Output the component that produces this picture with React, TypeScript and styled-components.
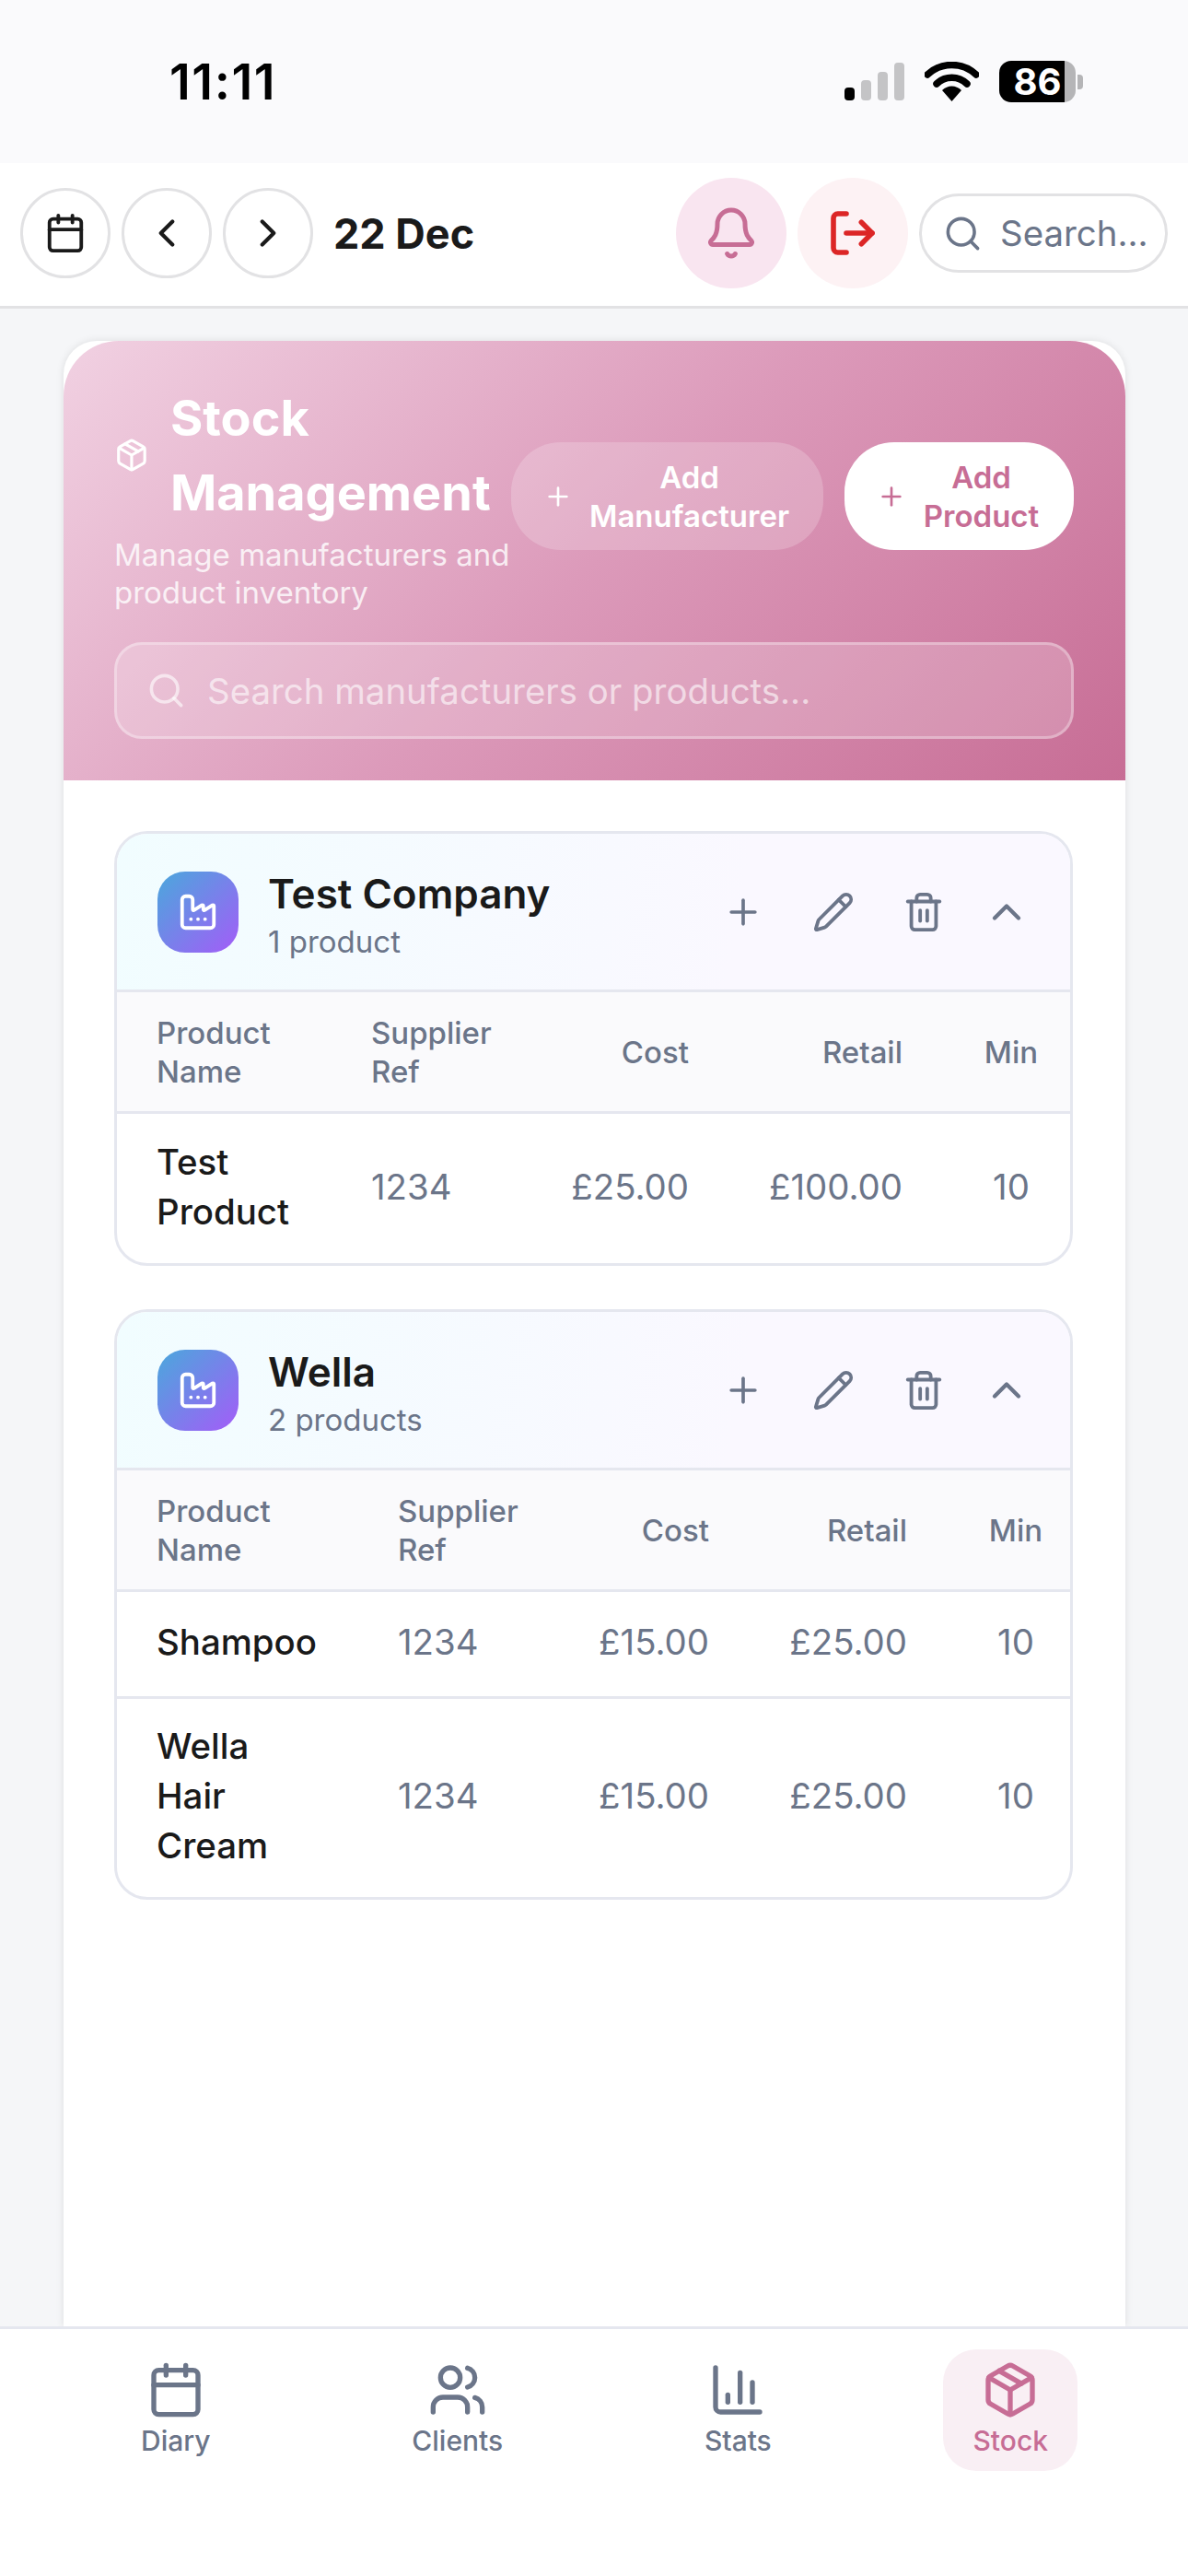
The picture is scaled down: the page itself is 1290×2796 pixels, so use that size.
import styled, { createGlobalStyle } from 'styled-components';
import {
  BarChart3,
  Bell,
  Calendar,
  ChevronLeft,
  ChevronRight,
  ChevronUp,
  Factory,
  LogOut,
  Package,
  Pencil,
  Plus,
  Search,
  Trash2,
  Users,
} from 'lucide-react';

const GlobalStyle = createGlobalStyle`
  html, body {
    margin: 0;
    padding: 0;
    background: #f5f6f8;
    font-family: Inter, "Liberation Sans", sans-serif;
  }
  * { box-sizing: border-box; }
`;

type Product = { name: string; ref: string; cost: string; retail: string; min: string; height: number };
type Company = { name: string; count: string; nameCol: number; costCol: number; retailCol: number; products: Product[] };

const companies: Company[] = [
  {
    name: 'Test Company',
    count: '1 product',
    nameCol: 233,
    costCol: 155,
    retailCol: 232,
    products: [{ name: 'Test Product', ref: '1234', cost: '£25.00', retail: '£100.00', min: '10', height: 162 }],
  },
  {
    name: 'Wella',
    count: '2 products',
    nameCol: 262,
    costCol: 148,
    retailCol: 215,
    products: [
      { name: 'Shampoo', ref: '1234', cost: '£15.00', retail: '£25.00', min: '10', height: 116 },
      { name: 'Wella Hair Cream', ref: '1234', cost: '£15.00', retail: '£25.00', min: '10', height: 215 },
    ],
  },
];

const navItems = [
  { label: 'Diary', icon: Calendar },
  { label: 'Clients', icon: Users },
  { label: 'Stats', icon: BarChart3 },
  { label: 'Stock', icon: Package, active: true },
];

export default function App() {
  return (
    <Screen>
      <GlobalStyle />
      <StatusBar>
        <Clock>11:11</Clock>
        <StatusIcons>
          <svg width="65" height="41" viewBox="0 0 65 41">
            <rect x="0" y="27" width="11" height="14" rx="4" fill="#000" />
            <rect x="18" y="19" width="11" height="22" rx="4" fill="#c4c4c6" />
            <rect x="36" y="10" width="11" height="31" rx="4" fill="#c4c4c6" />
            <rect x="54" y="0" width="11" height="41" rx="4" fill="#c4c4c6" />
          </svg>
          <svg width="59" height="43" viewBox="0 0 59 43">
            <path d="M3 14C18 0 41 0 56 14" fill="none" stroke="#000" strokeWidth="7.5" strokeLinecap="round" />
            <path d="M13 24C22 15 37 15 46 24" fill="none" stroke="#000" strokeWidth="7.5" strokeLinecap="round" />
            <path d="M19 31c6-6 15-6 21 0L29.500 43z" fill="#000" />
          </svg>
          <Battery>
            <BatteryBody>86</BatteryBody>
            <BatteryCap />
          </Battery>
        </StatusIcons>
      </StatusBar>

      <TopBar>
        <DateControls>
          <RoundButton><Calendar size={46} strokeWidth={2} /></RoundButton>
          <RoundButton><ChevronLeft size={50} strokeWidth={2} /></RoundButton>
          <RoundButton><ChevronRight size={50} strokeWidth={2} /></RoundButton>
          <DateLabel>22 Dec</DateLabel>
        </DateControls>
        <TopActions>
          <BigRound $bg="#f9e5f0" $color="#c76d95"><Bell size={60} strokeWidth={2} /></BigRound>
          <BigRound $bg="#fdf2f4" $color="#dc2626"><LogOut size={56} strokeWidth={2.4} /></BigRound>
          <TopSearch>
            <Search size={43} strokeWidth={2} color="#6b7589" />
            <span>Search...</span>
          </TopSearch>
        </TopActions>
      </TopBar>

      <Main>
        <Card>
          <Hero>
            <HeroRow>
              <HeroText>
                <TitleRow>
                  <Package size={38} strokeWidth={2} color="#fff" />
                  <Title>Stock Management</Title>
                </TitleRow>
                <Subtitle>Manage manufacturers and product inventory</Subtitle>
              </HeroText>
              <HeroButtons>
                <AddButton $width={339}>
                  <Plus size={32} strokeWidth={2} />
                  <span>Add Manufacturer</span>
                </AddButton>
                <AddButton $primary $width={249}>
                  <Plus size={32} strokeWidth={2} />
                  <span>Add Product</span>
                </AddButton>
              </HeroButtons>
            </HeroRow>
            <HeroSearch>
              <Search size={43} strokeWidth={2} />
              <span>Search manufacturers or products...</span>
            </HeroSearch>
          </Hero>

          <CompanyList>
            {companies.map((company) => (
              <CompanyCard key={company.name}>
                <CompanyHeader>
                  <CompanyInfo>
                    <FactoryBadge><Factory size={46} strokeWidth={2} color="#fff" /></FactoryBadge>
                    <CompanyText>
                      <CompanyName>{company.name}</CompanyName>
                      <CompanyCount>{company.count}</CompanyCount>
                    </CompanyText>
                  </CompanyInfo>
                  <CompanyActions>
                    <ActionButton><Plus size={44} strokeWidth={2} /></ActionButton>
                    <ActionButton><Pencil size={46} strokeWidth={2} /></ActionButton>
                    <ActionButton><Trash2 size={46} strokeWidth={2} /></ActionButton>
                    <ActionButton $narrow><ChevronUp size={52} strokeWidth={2} /></ActionButton>
                  </CompanyActions>
                </CompanyHeader>
                <HeadRow $name={company.nameCol} $cost={company.costCol} $retail={company.retailCol}>
                  <span>Product Name</span>
                  <span>Supplier Ref</span>
                  <RightCell>Cost</RightCell>
                  <RightCell>Retail</RightCell>
                  <MinCell>Min</MinCell>
                </HeadRow>
                {company.products.map((product) => (
                  <BodyRow
                    key={product.name}
                    $name={company.nameCol}
                    $cost={company.costCol}
                    $retail={company.retailCol}
                    $height={product.height}
                  >
                    <ProductName>{product.name}</ProductName>
                    <span>{product.ref}</span>
                    <RightCell>{product.cost}</RightCell>
                    <RightCell>{product.retail}</RightCell>
                    <MinCell>{product.min}</MinCell>
                  </BodyRow>
                ))}
              </CompanyCard>
            ))}
          </CompanyList>
        </Card>
      </Main>

      <BottomNav>
        {navItems.map(({ label, icon: Icon, active }) => (
          <NavItem key={label} $active={active}>
            <Icon size={64} strokeWidth={2} />
            <span>{label}</span>
          </NavItem>
        ))}
      </BottomNav>
    </Screen>
  );
}

const Screen = styled.div`
  width: 1290px;
  height: 2796px;
  display: flex;
  flex-direction: column;
  overflow: hidden;
  background: #f5f6f8;
`;

const StatusBar = styled.div`
  height: 177px;
  flex: none;
  background: #fafafc;
  display: flex;
  align-items: center;
  justify-content: space-between;
  padding: 0 114px 0 184px;
`;

const Clock = styled.div`
  font-size: 54px;
  font-weight: 600;
  color: #000;
  letter-spacing: 1.5px;
`;

const StatusIcons = styled.div`
  display: flex;
  align-items: center;
  gap: 22px;
`;

const Battery = styled.div`
  display: flex;
  align-items: center;
  gap: 2px;
`;

const BatteryBody = styled.div`
  width: 83px;
  height: 45px;
  border-radius: 13px;
  background: linear-gradient(90deg, #000 86%, #b5b5b7 86%);
  color: #fff;
  font-size: 40px;
  font-weight: 700;
  line-height: 45px;
  text-align: center;
`;

const BatteryCap = styled.div`
  width: 6px;
  height: 16px;
  border-radius: 0 4px 4px 0;
  background: #b5b5b7;
`;

const TopBar = styled.div`
  height: 158px;
  flex: none;
  background: #fff;
  border-bottom: 3px solid #e2e2e4;
  display: flex;
  align-items: center;
  justify-content: space-between;
  padding: 0 22px 3px;
`;

const DateControls = styled.div`
  display: flex;
  align-items: center;
  gap: 12px;
`;

const RoundButton = styled.div`
  width: 98px;
  height: 98px;
  border-radius: 50%;
  border: 3px solid #e2e2e4;
  background: #fff;
  color: #1a1a1a;
  display: flex;
  align-items: center;
  justify-content: center;
`;

const DateLabel = styled.div`
  margin-left: 10px;
  font-size: 45px;
  font-weight: 700;
  color: #1a1a1a;
`;

const TopActions = styled.div`
  display: flex;
  align-items: center;
  gap: 12px;
`;

const BigRound = styled.div<{ $bg: string; $color: string }>`
  width: 120px;
  height: 120px;
  border-radius: 50%;
  background: ${(p) => p.$bg};
  color: ${(p) => p.$color};
  display: flex;
  align-items: center;
  justify-content: center;
`;

const TopSearch = styled.div`
  width: 270px;
  height: 86px;
  border-radius: 43px;
  border: 3px solid #e2e2e4;
  background: #fff;
  display: flex;
  align-items: center;
  gap: 19px;
  padding-left: 23px;
  font-size: 38.4px;
  color: #6b7589;
  white-space: nowrap;
  overflow: hidden;

  svg { flex: none; }
`;

const Main = styled.div`
  flex: 1;
  min-height: 0;
  display: flex;
  flex-direction: column;
  padding: 35px 68px 0 69px;
`;

const Card = styled.div`
  flex: 1;
  background: #fff;
  border-radius: 36px 36px 0 0;
  box-shadow: 0 0 8px rgba(0, 0, 0, 0.1);
`;

const Hero = styled.div`
  height: 477px;
  border-radius: 60px 60px 0 0;
  background: linear-gradient(135deg, #f1d1e2 0%, #dc9aba 50%, #c76d95 100%);
  padding: 43px 56px 0 55px;
`;

const HeroRow = styled.div`
  display: flex;
  align-items: center;
  justify-content: space-between;
`;

const HeroText = styled.div`
  width: 430px;
  flex: none;
  color: #fff;
`;

const TitleRow = styled.div`
  display: flex;
  align-items: center;
  gap: 23px;
  margin-bottom: 7px;
  white-space: nowrap;
`;

const Title = styled.h1`
  margin: 0;
  width: 370px;
  font-size: 54px;
  line-height: 81px;
  font-weight: 700;
  white-space: normal;
`;

const Subtitle = styled.p`
  margin: 0;
  font-size: 33px;
  line-height: 41px;
  opacity: 0.8;
`;

const HeroButtons = styled.div`
  display: flex;
  gap: 23px;
`;

const AddButton = styled.div<{ $primary?: boolean; $width: number }>`
  width: ${(p) => p.$width}px;
  height: 117px;
  border-radius: 54px;
  background: ${(p) => (p.$primary ? '#fff' : 'rgba(255, 255, 255, 0.2)')};
  color: ${(p) => (p.$primary ? '#c76d95' : '#fff')};
  display: flex;
  align-items: center;
  gap: 16px;
  padding: 0 35px;
  font-size: 33px;
  line-height: 42px;
  font-weight: 600;
  text-align: center;

  svg { flex: none; }
  span { flex: 1; }
`;

const HeroSearch = styled.div`
  height: 105px;
  margin-top: 33px;
  border-radius: 30px;
  border: 3px solid rgba(255, 255, 255, 0.3);
  background: rgba(255, 255, 255, 0.2);
  color: rgba(255, 255, 255, 0.6);
  display: flex;
  align-items: center;
  gap: 23px;
  padding-left: 32px;
  font-size: 38.4px;
`;

const CompanyList = styled.div`
  display: flex;
  flex-direction: column;
  gap: 47px;
  padding: 55px 57px 0 55px;
`;

const CompanyCard = styled.div`
  border: 3px solid #e5e7ef;
  border-radius: 36px;
  overflow: hidden;
  background: #fff;
`;

const CompanyHeader = styled.div`
  height: 172px;
  display: flex;
  align-items: center;
  justify-content: space-between;
  padding: 0 28px 0 44px;
  border-bottom: 3px solid #e5e7ef;
  background: linear-gradient(100deg, #f1fdff 0%, #faf8ff 65%);
`;

const CompanyInfo = styled.div`
  display: flex;
  align-items: center;
  gap: 32px;
`;

const FactoryBadge = styled.div`
  width: 88px;
  height: 88px;
  border-radius: 30px;
  background: linear-gradient(135deg, #4aa8dc 0%, #a45cf8 100%);
  display: flex;
  align-items: center;
  justify-content: center;
`;

const CompanyText = styled.div`
  padding-top: 5px;
`;

const CompanyName = styled.div`
  font-size: 44px;
  line-height: 56px;
  font-weight: 600;
  color: #1a1a1a;
`;

const CompanyCount = styled.div`
  margin-top: 3px;
  font-size: 33px;
  line-height: 42px;
  color: #6b7589;
`;

const CompanyActions = styled.div`
  display: flex;
  align-items: center;
  color: #6b7589;
`;

const ActionButton = styled.div<{ $narrow?: boolean }>`
  width: ${(p) => (p.$narrow ? 82 : 98)}px;
  display: flex;
  justify-content: center;
`;

const gridRow = (p: { $name: number; $cost: number; $retail: number }) =>
  `${p.$name}px 190px ${p.$cost}px ${p.$retail}px 158px`;

const HeadRow = styled.div<{ $name: number; $cost: number; $retail: number }>`
  height: 132px;
  display: grid;
  grid-template-columns: ${gridRow};
  align-items: center;
  padding-left: 43px;
  background: #fafafc;
  border-bottom: 3px solid #e5e7ef;
  font-size: 33px;
  line-height: 42px;
  font-weight: 500;
  color: #6b7589;

  span:nth-child(-n + 2) { padding-right: 70px; }
`;

const BodyRow = styled.div<{ $name: number; $cost: number; $retail: number; $height: number }>`
  height: ${(p) => p.$height}px;
  display: grid;
  grid-template-columns: ${gridRow};
  align-items: center;
  padding: 0 0 5px 43px;
  font-size: 38.4px;
  line-height: 54px;
  color: #6b7589;
  border-bottom: 3px solid #e5e7ef;

  &:last-child { border-bottom: none; }
`;

const ProductName = styled.span`
  color: #1a1a1a;
  font-weight: 500;
  max-width: 176px;
`;

const RightCell = styled.span`
  text-align: right;
`;

const MinCell = styled.span`
  padding-left: 78px;
  text-align: center;
  width: 158px;
`;

const BottomNav = styled.div`
  height: 271px;
  flex: none;
  background: #fff;
  border-top: 3px solid #e5e7ef;
  display: flex;
  align-items: flex-start;
  justify-content: space-between;
  padding: 22px 120px 0 121px;
`;

const NavItem = styled.div<{ $active?: boolean }>`
  height: 132px;
  min-width: 132px;
  padding: 12px 32px 0;
  border-radius: 36px;
  background: ${(p) => (p.$active ? '#f9eff4' : 'transparent')};
  color: ${(p) => (p.$active ? '#c76d95' : '#6b7589')};
  display: flex;
  flex-direction: column;
  align-items: center;
  gap: 4px;
  font-size: 30px;
  line-height: 38px;
  font-weight: 500;
`;
